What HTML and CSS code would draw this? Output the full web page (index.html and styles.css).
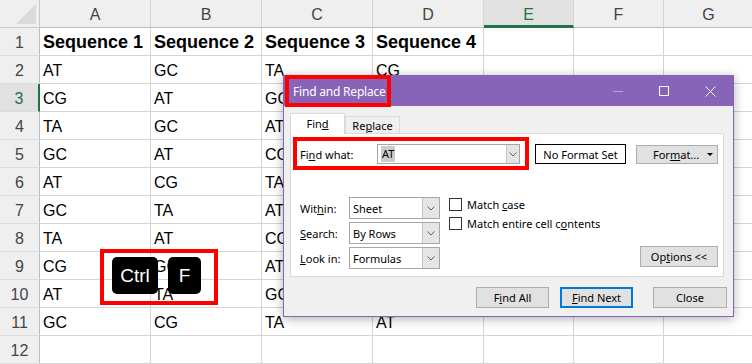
FILE: index.html
```html
<!DOCTYPE html>
<html>
	<head>
		<meta charset="utf-8" />
		<title>Find and Replace</title>
		<link rel="stylesheet" href="styles.css">
	</head>
	<body>
		<!-- 表格 -->
		<div class="sheet">
			<div class="corner"><svg width="20" height="20" viewBox="0 0 20 20"><polygon points="20,0 20,20 0,20" fill="#dadada"/></svg></div>
			<div class="colhead">A</div>
			<div class="colhead">B</div>
			<div class="colhead">C</div>
			<div class="colhead">D</div>
			<div class="colhead colhead-on">E</div>
			<div class="colhead">F</div>
			<div class="colhead">G</div>

			<div class="rowhead">1</div>
			<div class="cell bold">Sequence 1</div><div class="cell bold">Sequence 2</div><div class="cell bold">Sequence 3</div><div class="cell bold">Sequence 4</div><div class="cell"></div><div class="cell"></div><div class="cell"></div>

			<div class="rowhead">2</div>
			<div class="cell">AT</div><div class="cell">GC</div><div class="cell">TA</div><div class="cell">CG</div><div class="cell"></div><div class="cell"></div><div class="cell"></div>

			<div class="rowhead rowhead-on">3</div>
			<div class="cell">CG</div><div class="cell">AT</div><div class="cell">GC</div><div class="cell"></div><div class="cell"></div><div class="cell"></div><div class="cell"></div>

			<div class="rowhead">4</div>
			<div class="cell">TA</div><div class="cell">GC</div><div class="cell">AT</div><div class="cell"></div><div class="cell"></div><div class="cell"></div><div class="cell"></div>

			<div class="rowhead">5</div>
			<div class="cell">GC</div><div class="cell">AT</div><div class="cell">CG</div><div class="cell"></div><div class="cell"></div><div class="cell"></div><div class="cell"></div>

			<div class="rowhead">6</div>
			<div class="cell">AT</div><div class="cell">CG</div><div class="cell">TA</div><div class="cell"></div><div class="cell"></div><div class="cell"></div><div class="cell"></div>

			<div class="rowhead">7</div>
			<div class="cell">GC</div><div class="cell">TA</div><div class="cell">AT</div><div class="cell"></div><div class="cell"></div><div class="cell"></div><div class="cell"></div>

			<div class="rowhead">8</div>
			<div class="cell">TA</div><div class="cell">AT</div><div class="cell">CG</div><div class="cell"></div><div class="cell"></div><div class="cell"></div><div class="cell"></div>

			<div class="rowhead">9</div>
			<div class="cell">CG</div><div class="cell">GC</div><div class="cell">AT</div><div class="cell"></div><div class="cell"></div><div class="cell"></div><div class="cell"></div>

			<div class="rowhead">10</div>
			<div class="cell">AT</div><div class="cell">TA</div><div class="cell">GC</div><div class="cell"></div><div class="cell"></div><div class="cell"></div><div class="cell"></div>

			<div class="rowhead">11</div>
			<div class="cell">GC</div><div class="cell">CG</div><div class="cell">TA</div><div class="cell">AT</div><div class="cell"></div><div class="cell"></div><div class="cell"></div>

			<div class="rowhead">12</div>
			<div class="cell"></div><div class="cell"></div><div class="cell"></div><div class="cell"></div><div class="cell"></div><div class="cell"></div><div class="cell"></div>
		</div>

		<!-- 查找和替换对话框 -->
		<div class="dialog">
			<div class="titlebar">
				<span class="title">Find and Replace</span>
				<div class="caption">
					<span class="cap-btn"><svg width="10" height="10"><line x1="0" y1="5.5" x2="10" y2="5.5" stroke="#b8a4d6"/></svg></span>
					<span class="cap-btn"><svg width="10" height="10"><rect x="0.5" y="0.5" width="9" height="9" fill="none" stroke="#fff"/></svg></span>
					<span class="cap-btn"><svg width="11" height="11"><path d="M0.5 0.5L10.5 10.5M10.5 0.5L0.5 10.5" stroke="#fff"/></svg></span>
				</div>
			</div>
			<div class="dlg-body">
				<div class="tabs">
					<div class="tab tab-on"><span>Fin<u>d</u></span></div>
					<div class="tab"><span>Re<u>p</u>lace</span></div>
				</div>
				<div class="panel">
					<div class="find-row">
						<span class="find-label">Fi<u>n</u>d what:</span>
						<div class="combo combo-find">
							<span class="combo-text"><span class="sel">AT</span></span>
							<span class="drop"><svg width="8" height="5"><polyline points="0.5,0.5 4,4 7.5,0.5" fill="none" stroke="#606060"/></svg></span>
						</div>
						<div class="fmt-preview">No Format Set</div>
						<div class="btn btn-format"><span>For<u>m</u>at...</span><span class="tri"></span></div>
					</div>
					<div class="options">
						<div class="opt-grid">
							<span class="opt-label">Wit<u>h</u>in:</span>
							<div class="combo"><span class="combo-text">Sheet</span><span class="drop"><svg width="8" height="5"><polyline points="0.5,0.5 4,4 7.5,0.5" fill="none" stroke="#606060"/></svg></span></div>
							<span class="opt-label"><u>S</u>earch:</span>
							<div class="combo"><span class="combo-text">By Rows</span><span class="drop"><svg width="8" height="5"><polyline points="0.5,0.5 4,4 7.5,0.5" fill="none" stroke="#606060"/></svg></span></div>
							<span class="opt-label"><u>L</u>ook in:</span>
							<div class="combo"><span class="combo-text">Formulas</span><span class="drop"><svg width="8" height="5"><polyline points="0.5,0.5 4,4 7.5,0.5" fill="none" stroke="#606060"/></svg></span></div>
						</div>
						<div class="opt-checks">
							<div class="check"><span class="box"></span><span>Match <u>c</u>ase</span></div>
							<div class="check"><span class="box"></span><span>Match entire cell c<u>o</u>ntents</span></div>
							<div class="btn btn-options"><span>Op<u>t</u>ions &lt;&lt;</span></div>
						</div>
					</div>
				</div>
				<div class="actions">
					<div class="btn btn-act"><span>F<u>i</u>nd All</span></div>
					<div class="btn btn-act btn-default"><span><u>F</u>ind Next</span></div>
					<div class="btn btn-act btn-close">Close</div>
				</div>
			</div>
		</div>

		<!-- 红框标注 -->
		<div class="mark mark-title"></div>
		<div class="mark mark-find"></div>
		<div class="mark mark-keys">
			<span class="key key-ctrl">Ctrl</span>
			<span class="key key-f">F</span>
		</div>
	</body>
</html>
```

FILE: styles.css
```css
body{
	margin: 0;
	width: 752px;
	height: 364px;
	overflow: hidden;
	position: relative;
	background: #fff;
	font-family: "Liberation Sans", Arial, sans-serif;
}

/* 表格 */
.sheet{
	display: grid;
	grid-template-columns: 40px 111px 111px 111px 111px 90px 90px 90px;
	grid-auto-rows: 28px;
	width: 754px;
}
.corner{
	background: #efefef;
	border-right: 1px solid #c8c8c8;
	border-bottom: 1px solid #c8c8c8;
	display: flex;
	align-items: flex-end;
	justify-content: flex-end;
	padding: 0 3px 3px 0;
}
.corner svg{
	display: block;
}
.colhead{
	background: #efefef;
	border-right: 1px solid #d4d4d4;
	border-bottom: 1px solid #bdbdbd;
	display: flex;
	align-items: center;
	justify-content: center;
	font-size: 16px;
	color: #444;
	padding-top: 2px;
}
.colhead-on{
	background: #e1e1e1;
	color: #217346;
	border-bottom: 3px solid #217346;
	padding-top: 4px;
}
.rowhead{
	background: #efefef;
	border-right: 1px solid #bdbdbd;
	border-bottom: 1px solid #dcdcdc;
	display: flex;
	align-items: flex-end;
	justify-content: center;
	padding-bottom: 3px;
	font-size: 16px;
	color: #444;
}
.rowhead-on{
	background: #e1e1e1;
	color: #217346;
	border-right: 2px solid #217346;
}
.cell{
	border-right: 1px solid #d4d4d4;
	border-bottom: 1px solid #d4d4d4;
	display: flex;
	align-items: flex-end;
	padding: 0 0 3px 3px;
	font-size: 16px;
	color: #000;
	white-space: nowrap;
	overflow: hidden;
}
.bold{
	font-weight: bold;
	font-size: 18px;
	padding-bottom: 2px;
}

/* 对话框 */
.dialog{
	position: absolute;
	left: 283px;
	top: 75px;
	width: 451px;
	height: 242px;
	box-sizing: border-box;
	background: #f0f0f0;
	border: 1px solid #8764b8;
	box-shadow: 0 2px 10px rgba(0,0,0,0.3);
	font-family: "Noto Sans", sans-serif;
	font-size: 11px;
	color: #000;
	z-index: 2;
}
.titlebar{
	height: 30px;
	background: #8764b8;
	display: flex;
	align-items: center;
	padding-left: 9px;
	color: #fff;
}
.title{
	font-size: 12px;
	letter-spacing: -0.2px;
}
.caption{
	margin-left: auto;
	display: flex;
	height: 30px;
}
.cap-btn{
	width: 46px;
	display: flex;
	align-items: center;
	justify-content: center;
}
.cap-btn svg{
	display: block;
}
.dlg-body{
	padding: 7px 6px 0 6px;
}
.tabs{
	display: flex;
	align-items: flex-end;
	height: 20px;
}
.tab{
	width: 55px;
	height: 17px;
	box-sizing: border-box;
	border: 1px solid #d9d9d9;
	border-bottom: none;
	display: flex;
	align-items: center;
	justify-content: center;
	background: #f0f0f0;
}
.tab-on{
	height: 21px;
	margin-bottom: -1px;
	background: #fff;
	position: relative;
	z-index: 1;
	padding-bottom: 2px;
}
.panel{
	width: 434px;
	height: 144px;
	box-sizing: border-box;
	background: #fff;
	border: 1px solid #d9d9d9;
	padding: 10px 5px 0 9px;
}
.find-row{
	display: flex;
	align-items: center;
	height: 20px;
}
.find-label{
	width: 77px;
}
.combo{
	display: flex;
	height: 22px;
	box-sizing: border-box;
	border: 1px solid #a6a6a6;
	background: #fff;
}
.combo-find{
	width: 143px;
	height: 20px;
}
.combo-text{
	flex: 1;
	display: flex;
	align-items: center;
	padding-left: 3px;
}
.sel{
	background: #cccccc;
	padding: 0 1px;
	line-height: 16px;
}
.drop{
	width: 16px;
	background: #e5e5e5;
	border-left: 1px solid #c4c4c4;
	display: flex;
	align-items: center;
	justify-content: center;
}
.combo-find .drop{
	width: 12px;
}
.drop svg{
	display: block;
}
.fmt-preview{
	margin-left: 15px;
	width: 91px;
	height: 20px;
	box-sizing: border-box;
	border: 1px solid #000;
	display: flex;
	align-items: center;
	justify-content: center;
}
.btn{
	height: 21px;
	box-sizing: border-box;
	background: #e1e1e1;
	border: 1px solid #adadad;
	display: flex;
	align-items: center;
	justify-content: center;
}
.btn-format{
	margin-left: 10px;
	width: 82px;
	height: 19px;
	justify-content: flex-start;
	padding-left: 16px;
}
.tri{
	margin-left: auto;
	margin-right: 4px;
	border-left: 3px solid transparent;
	border-right: 3px solid transparent;
	border-top: 3px solid #000;
}
.options{
	display: flex;
	margin-top: 33px;
}
.opt-grid{
	display: grid;
	grid-template-columns: 49px 91px;
	grid-auto-rows: 22px;
	row-gap: 3px;
	align-items: center;
}
.opt-checks{
	flex: 1;
	margin-left: 9px;
	display: flex;
	flex-direction: column;
}
.check{
	display: flex;
	align-items: center;
	height: 15px;
	margin-bottom: 4px;
}
.box{
	width: 13px;
	height: 13px;
	box-sizing: border-box;
	border: 1px solid #333;
	background: #fff;
	margin-right: 5px;
}
.btn-options{
	margin-top: auto;
	margin-bottom: 2px;
	align-self: flex-end;
	width: 78px;
}
.actions{
	display: flex;
	justify-content: flex-end;
	margin-top: 10px;
}
.btn-act{
	width: 73px;
	margin-left: 11px;
}
.btn-default{
	border: 2px solid #0078d7;
}
.btn-close{
	width: 74px;
	margin-left: 20px;
}

/* 红框 */
.mark{
	position: absolute;
	box-sizing: border-box;
	border: 4px solid #ff0000;
	z-index: 3;
}
.mark-title{
	left: 285px;
	top: 75px;
	width: 106px;
	height: 32px;
}
.mark-find{
	left: 293px;
	top: 137px;
	width: 236px;
	height: 33px;
}
.mark-keys{
	left: 100px;
	top: 249px;
	width: 118px;
	height: 56px;
	display: flex;
	align-items: flex-start;
}
.key{
	margin-top: 4px;
	height: 37px;
	background: #000;
	border-radius: 5px;
	color: #fff;
	font-size: 19px;
	display: flex;
	align-items: center;
	justify-content: center;
}
.key-ctrl{
	margin-left: 8px;
	width: 46px;
}
.key-f{
	margin-left: 10px;
	width: 33px;
}
```
